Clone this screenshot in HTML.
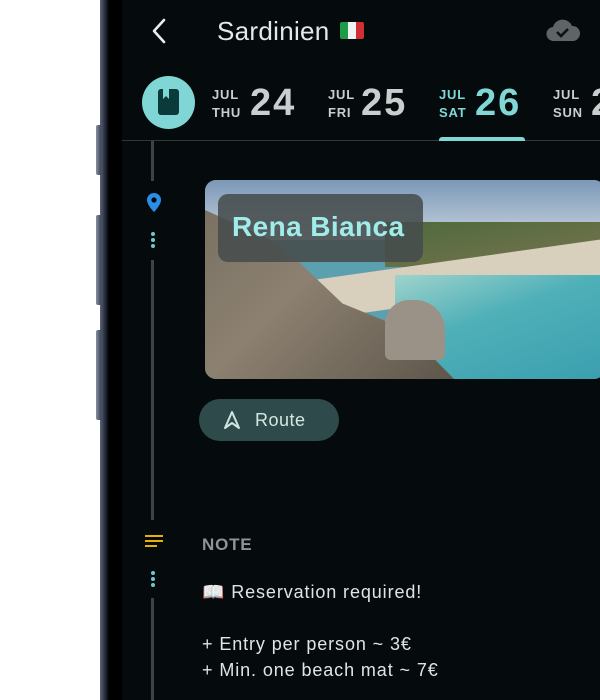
<!DOCTYPE html>
<html><head><meta charset="utf-8"><style>
*{margin:0;padding:0;box-sizing:border-box}
body{width:600px;height:700px;overflow:hidden;background:#fff;font-family:"Liberation Sans",sans-serif;position:relative}
.abs{position:absolute}
.frame{left:100px;top:0;width:24px;height:700px;background:linear-gradient(90deg,#5b6477 0,#3a4254 3px,#1d2230 6px,#000 9px,#000 24px)}
.btn{left:96px;width:5px;background:linear-gradient(90deg,#8890a0,#3d4556);border-radius:2px 0 0 2px}
.screen{left:122px;top:0;width:478px;height:700px;background:#050b0c}
.g{color:#c9cfcf}
.mon{font-size:13px;font-weight:bold;letter-spacing:.8px;line-height:18px}
.day{font-size:38px;font-weight:bold;letter-spacing:2px}
</style></head><body>
<div class="abs frame"></div>
<div class="abs btn" style="top:125px;height:50px"></div>
<div class="abs btn" style="top:215px;height:90px"></div>
<div class="abs btn" style="top:330px;height:90px"></div>
<div class="abs screen"></div>

<svg class="abs" style="left:148px;top:16px" width="22" height="30"><path d="M16 4 L6 15 L16 26" stroke="#e8eded" stroke-width="2.6" fill="none" stroke-linecap="round" stroke-linejoin="round"/></svg>
<div class="abs" style="left:217px;top:16px;font-size:26px;color:#e4e8e8;letter-spacing:.3px">Sardinien</div>
<div class="abs" style="left:340px;top:22px;width:24px;height:17px;display:flex;border-radius:2px;overflow:hidden"><div style="flex:1;background:#1f9a4a"></div><div style="flex:1;background:#f2f2f2"></div><div style="flex:1;background:#d22f34"></div></div>
<svg class="abs" style="left:546px;top:18px" width="34" height="24" viewBox="0 0 34 24"><path d="M8 23 A7 7 0 0 1 7 9 A10 10 0 0 1 26 8 A7.5 7.5 0 0 1 27 23 Z" fill="#5f6566"/><path d="M11 14 L15 18 L22 11" stroke="#111" stroke-width="2.6" fill="none"/></svg>

<div class="abs" style="left:142px;top:76px;width:53px;height:53px;border-radius:50%;background:#80d6d4"></div>
<div class="abs" style="left:158px;top:89px;width:21px;height:26px;border-radius:3px;background:#0b3a3a"></div>
<svg class="abs" style="left:162px;top:89px" width="8" height="12"><path d="M1 0 V10 L4 7 L7 10 V0Z" fill="#80d6d4"/></svg>

<div class="abs mon g" style="left:212px;top:86px">JUL<br>THU</div>
<div class="abs day g" style="left:250px;top:82px">24</div>
<div class="abs mon g" style="left:328px;top:86px">JUL<br>FRI</div>
<div class="abs day g" style="left:361px;top:82px">25</div>
<div class="abs mon" style="left:439px;top:86px;color:#7fd8d6">JUL<br>SAT</div>
<div class="abs day" style="left:475px;top:82px;color:#7fd8d6">26</div>
<div class="abs mon g" style="left:553px;top:86px">JUL<br>SUN</div>
<div class="abs day g" style="left:591px;top:82px">2</div>
<div class="abs" style="left:122px;top:140px;width:478px;height:1px;background:#303838"></div>
<div class="abs" style="left:439px;top:137px;width:86px;height:4px;background:#7fd8d6;border-radius:3px 3px 0 0"></div>

<div class="abs" style="left:151px;top:141px;width:3px;height:40px;background:#3b4546"></div>
<svg class="abs" style="left:145px;top:192px" width="18" height="22" viewBox="0 0 18 22"><path d="M9 1 A7 7 0 0 1 16 8 C16 13 9 20 9 20 C9 20 2 13 2 8 A7 7 0 0 1 9 1Z" fill="#2a8ee8"/><circle cx="9" cy="8" r="2.6" fill="#050b0c"/></svg>
<div class="abs" style="left:151px;top:232px;width:4px;height:4px;border-radius:50%;background:#6dc9d0;box-shadow:0 6px 0 #6dc9d0,0 12px 0 #6dc9d0"></div>
<div class="abs" style="left:151px;top:260px;width:3px;height:260px;background:#3b4546"></div>
<div class="abs" style="left:145px;top:535px;width:18px;height:2px;background:#e6b00c;box-shadow:0 5px 0 #e6b00c"></div>
<div class="abs" style="left:145px;top:545px;width:12px;height:2px;background:#e6b00c"></div>
<div class="abs" style="left:151px;top:571px;width:4px;height:4px;border-radius:50%;background:#6dc9d0;box-shadow:0 6px 0 #6dc9d0,0 12px 0 #6dc9d0"></div>
<div class="abs" style="left:151px;top:598px;width:3px;height:102px;background:#3b4546"></div>

<div class="abs" style="left:205px;top:180px;width:400px;height:199px;border-radius:11px;overflow:hidden;background:#5c9fae">
 <div class="abs" style="left:0;top:0;width:400px;height:60px;background:linear-gradient(180deg,#7b98b8,#c7d2dc)"></div>
 <div class="abs" style="left:180px;top:42px;width:220px;height:45px;background:linear-gradient(170deg,#4d6a3c,#7a7450)"></div>
 <div class="abs" style="left:100px;top:80px;width:300px;height:40px;background:#d8cfbd;transform:skewY(-8deg)"></div>
 <div class="abs" style="left:190px;top:95px;width:210px;height:110px;background:linear-gradient(160deg,#9fd3cc,#4fb0b8 40%,#3a9eae)"></div>
 <div class="abs" style="left:0;top:30px;width:250px;height:170px;background:linear-gradient(135deg,#7a7164,#8c8170 40%,#5e554b);clip-path:polygon(0 0,30% 20%,55% 55%,80% 70%,100% 100%,0 100%)"></div>
 <div class="abs" style="left:180px;top:120px;width:60px;height:60px;background:#9a9286;border-radius:40% 50% 10% 10%"></div>
</div>
<div class="abs" style="left:218px;top:194px;width:205px;height:68px;border-radius:10px;background:rgba(70,76,76,.88)"></div>
<div class="abs" style="left:232px;top:211px;font-size:28px;font-weight:bold;color:#9fecea;letter-spacing:.4px">Rena Bianca</div>

<div class="abs" style="left:199px;top:399px;width:140px;height:42px;border-radius:21px;background:#2e4a4a"></div>
<svg class="abs" style="left:223px;top:410px" width="18" height="20"><path d="M9 2 L16 18 L9 13 L2 18 Z" stroke="#cde5e3" stroke-width="2" fill="none" stroke-linejoin="round"/></svg>
<div class="abs" style="left:255px;top:410px;font-size:18px;color:#d4e6e4;letter-spacing:.5px">Route</div>

<div class="abs" style="left:202px;top:535px;font-size:17px;font-weight:bold;color:#8e9595;letter-spacing:.8px">NOTE</div>
<div class="abs" style="left:202px;top:579px;font-size:18px;color:#dfe4e4;line-height:26px;letter-spacing:.9px">📖 Reservation required!<br><br>+ Entry per person ~ 3€<br>+ Min. one beach mat ~ 7€</div>
</body></html>
